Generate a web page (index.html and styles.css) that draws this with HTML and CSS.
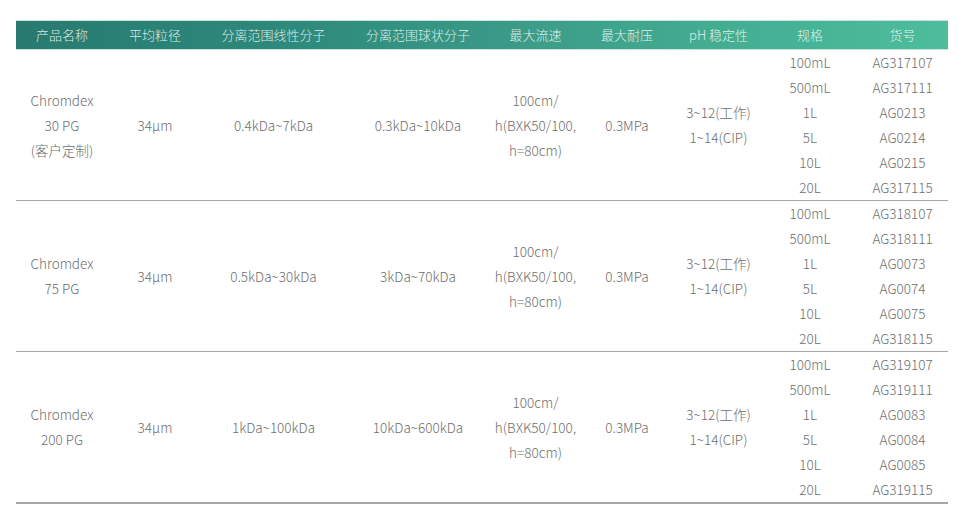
FILE: index.html
```html
<!DOCTYPE html>
<html lang="zh">
<head>
<meta charset="utf-8">
<link rel="stylesheet" href="styles.css">
</head>
<body>
<table class="spec">
<colgroup>
<col class="c1"><col class="c2"><col class="c3"><col class="c4"><col class="c5"><col class="c6"><col class="c7"><col class="c8"><col class="c9">
</colgroup>
<thead>
<tr><th>产品名称</th><th>平均粒径</th><th>分离范围线性分子</th><th>分离范围球状分子</th><th>最大流速</th><th>最大耐压</th><th>pH 稳定性</th><th>规格</th><th>货号</th></tr>
</thead>
<tbody class="group">
<tr><td rowspan="6">Chromdex<br>30 PG<br>(客户定制)</td><td rowspan="6">34μm</td><td rowspan="6">0.4kDa~7kDa</td><td rowspan="6">0.3kDa~10kDa</td><td rowspan="6">100cm/<br>h(BXK50/100,<br>h=80cm)</td><td rowspan="6">0.3MPa</td><td rowspan="6">3~12(工作)<br>1~14(CIP)</td><td>100mL</td><td>AG317107</td></tr>
<tr><td>500mL</td><td>AG317111</td></tr>
<tr><td>1L</td><td>AG0213</td></tr>
<tr><td>5L</td><td>AG0214</td></tr>
<tr><td>10L</td><td>AG0215</td></tr>
<tr><td>20L</td><td>AG317115</td></tr>
</tbody>
<tbody class="group">
<tr><td rowspan="6">Chromdex<br>75 PG</td><td rowspan="6">34μm</td><td rowspan="6">0.5kDa~30kDa</td><td rowspan="6">3kDa~70kDa</td><td rowspan="6">100cm/<br>h(BXK50/100,<br>h=80cm)</td><td rowspan="6">0.3MPa</td><td rowspan="6">3~12(工作)<br>1~14(CIP)</td><td>100mL</td><td>AG318107</td></tr>
<tr><td>500mL</td><td>AG318111</td></tr>
<tr><td>1L</td><td>AG0073</td></tr>
<tr><td>5L</td><td>AG0074</td></tr>
<tr><td>10L</td><td>AG0075</td></tr>
<tr><td>20L</td><td>AG318115</td></tr>
</tbody>
<tbody class="group last">
<tr><td rowspan="6">Chromdex<br>200 PG</td><td rowspan="6">34μm</td><td rowspan="6">1kDa~100kDa</td><td rowspan="6">10kDa~600kDa</td><td rowspan="6">100cm/<br>h(BXK50/100,<br>h=80cm)</td><td rowspan="6">0.3MPa</td><td rowspan="6">3~12(工作)<br>1~14(CIP)</td><td>100mL</td><td>AG319107</td></tr>
<tr><td>500mL</td><td>AG319111</td></tr>
<tr><td>1L</td><td>AG0083</td></tr>
<tr><td>5L</td><td>AG0084</td></tr>
<tr><td>10L</td><td>AG0085</td></tr>
<tr><td>20L</td><td>AG319115</td></tr>
</tbody>
</table>
</body>
</html>
```

FILE: styles.css
```css
html, body {
  margin: 0;
  padding: 0;
  background: #fff;
}
body {
  padding: 20px 0 0 16px;
  font-family: "Noto Sans CJK SC", "Noto Sans", sans-serif;
  font-size: 13.5px;
  font-weight: 300;
  color: #6e6e6e;
}
.spec {
  border-collapse: collapse;
  table-layout: fixed;
  width: 932px;
}
.c1 { width: 92px; }
.c2 { width: 94px; }
.c3 { width: 143px; }
.c4 { width: 146px; }
.c5 { width: 89px; }
.c6 { width: 94px; }
.c7 { width: 89px; }
.c8 { width: 94px; }
.c9 { width: 91px; }
thead tr {
  background: linear-gradient(90deg, #287a70 0%, #2d8a7c 30%, #3c9c88 55%, #43ad92 75%, #4dbd9c 100%);
}
th {
  height: 29px;
  padding: 0;
  font-size: 13px;
  font-weight: 300;
  color: rgba(255, 255, 255, 0.85);
  text-align: center;
  vertical-align: middle;
  border-top: 1px solid #c9e4dd;
  border-bottom: 1px solid #c9e4dd;
  line-height: 28px;
  box-sizing: border-box;
}
td {
  padding: 0;
  height: 25px;
  line-height: 25px;
  text-align: center;
  vertical-align: middle;
  white-space: nowrap;
}
.group tr:last-child td {
  height: 23px;
}
.group tr:last-child td,
.group td[rowspan] {
  border-bottom: 1px solid #a6a6a6;
}
.group.last tr:last-child td,
.group.last td[rowspan] {
  border-bottom: 2px solid #a6a6a6;
}
```
